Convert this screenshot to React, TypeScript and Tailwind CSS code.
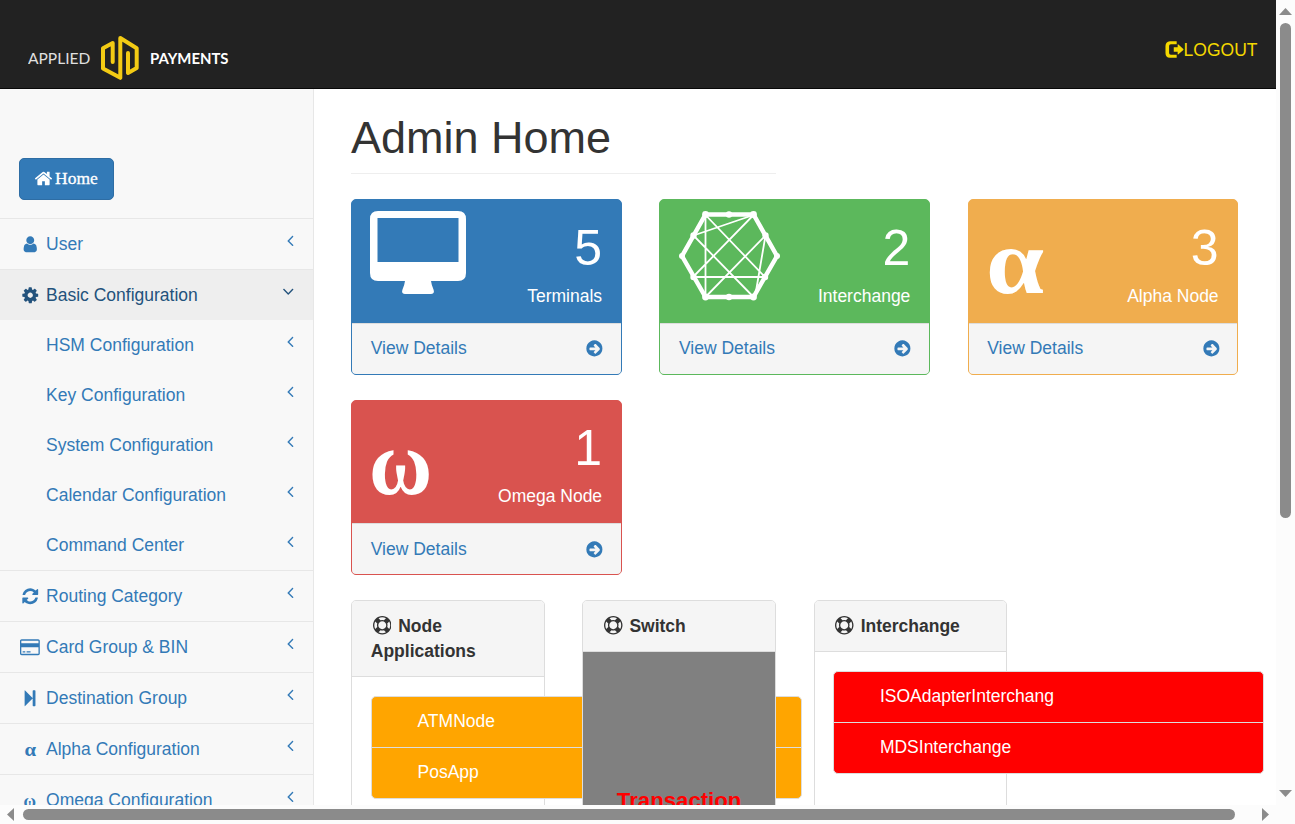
import type { ReactNode } from "react";

const ICONS = {
  home: "M1472 992v480q0 26-19 45t-45 19h-384v-384h-256v384h-384q-26 0-45-19t-19-45v-480q0-1 .5-3t.5-3l575-474 575 474q1 2 1 6zm223-69l-62 74q-8 9-21 11h-3q-13 0-21-7l-692-577-692 577q-12 8-24 7-13-2-21-11l-62-74q-8-10-7-23.5t11-21.5l719-599q32-26 76-26t76 26l244 204v-195q0-14 9-23t23-9h192q14 0 23 9t9 23v408l219 182q10 8 11 21.5t-7 23.5z",
  user: "M1536 1399q0 109-62.5 187t-150.5 78h-854q-88 0-150.5-78t-62.5-187q0-85 8.5-160.5t31.5-152 58.5-131 94-89 134.5-34.5q131 128 313 128t313-128q76 0 134.5 34.5t94 89 58.5 131 31.5 152 8.5 160.5zm-256-887q0 159-112.5 271.5t-271.5 112.5-271.5-112.5-112.5-271.5 112.5-271.5 271.5-112.5 271.5 112.5 112.5 271.5z",
  gear: "M1152 896q0-106-75-181t-181-75-181 75-75 181 75 181 181 75 181-75 75-181zm512-109v222q0 12-8 23t-20 13l-185 28q-19 54-39 91 35 50 107 138 10 12 10 25t-9 23q-27 37-99 108t-94 71q-12 0-26-9l-138-108q-44 23-91 38-16 136-29 186-7 28-36 28h-222q-14 0-24.5-8.5t-11.5-21.5l-28-184q-49-16-90-37l-141 107q-10 9-25 9-14 0-25-11-126-114-165-168-7-10-7-23 0-12 8-23 15-21 51-66.5t54-70.5q-27-50-41-99l-183-27q-13-2-21-12.5t-8-23.5v-222q0-12 8-23t19-13l186-28q14-46 39-92-40-57-107-138-10-12-10-24 0-10 9-23 26-36 98.5-107.5t94.5-71.5q13 0 26 10l138 107q44-23 91-38 16-136 29-186 7-28 36-28h222q14 0 24.5 8.5t11.5 21.5l28 184q49 16 90 37l142-107q9-9 24-9 13 0 25 10 129 119 165 170 7 8 7 22 0 12-8 23-15 21-51 66.5t-54 70.5q26 50 41 98l183 28q13 2 21 12.5t8 23.5z",
  refresh:
    "M1639 1056q0 5-1 7-64 268-268 434.5t-478 166.5q-146 0-282.5-55t-243.5-157l-129 129q-19 19-45 19t-45-19-19-45v-448q0-26 19-45t45-19h448q26 0 45 19t19 45-19 45l-137 137q71 66 161 102t187 36q134 0 250-65t186-179q11-17 53-117 8-23 30-23h192q13 0 22.5 9.5t9.5 22.5zm25-800v448q0 26-19 45t-45 19h-448q-26 0-45-19t-19-45 19-45l138-138q-148-137-349-137-134 0-250 65t-186 179q-11 17-53 117-8 23-30 23h-199q-13 0-22.5-9.5t-9.5-22.5v-7q65-268 270-434.5t480-166.5q146 0 284 55.5t245 156.5l130-129q19-19 45-19t45 19 19 45z",
  step: "M352 160q0-50 45-13l725 720q6 6 10 14V192q0-60 60-60h148q60 0 60 60v1408q0 60-60 60h-148q-60 0-60-60V911q-4 8-10 14l-725 720q-45 37-45-13z",
  ring: "M896 0q182 0 348 71t286 191 191 286 71 348-71 348-191 286-286 191-348 71-348-71-286-191-191-286-71-348 71-348 191-286 286-191 348-71zm0 128q-190 0-361 90l194 194q82-28 167-28t167 28l194-194q-171-90-361-90zm-678 1129l194-194q-28-82-28-167t28-167l-194-194q-90 171-90 361t90 361zm678 407q190 0 361-90l-194-194q-82 28-167 28t-167-28l-194 194q171 90 361 90zm0-384q159 0 271.5-112.5t112.5-271.5-112.5-271.5-271.5-112.5-271.5 112.5-112.5 271.5 112.5 271.5 271.5 112.5zm484-217l194 194q90-171 90-361t-90-361l-194 194q28 82 28 167t-28 167z",
  left: "M1203 544q0 13-10 23l-393 393 393 393q10 10 10 23t-10 23l-50 50q-10 10-23 10t-23-10l-466-466q-10-10-10-23t10-23l466-466q10-10 23-10t23 10l50 50q10 10 10 23z",
  down: "M1395 736q0 13-10 23l-466 466q-10 10-23 10t-23-10l-466-466q-10-10-10-23t10-23l50-50q10-10 23-10t23 10l393 393 393-393q10-10 23-10t23 10l50 50q10 10 10 23z",
};

// The arrow is cut out of its disc on the same centre line.
const ARROW_DISC =
  "M1413 896q0-27-18-45l-91-91-271-271q-18-18-45-18t-45 18l-91 91q-18 18-18 45t18 45l142 142h-502q-26 0-45 19t-19 45v128q0 26 19 45t45 19h502l-142 142q-19 19-19 45t19 45l91 91q18 18 45 18t45-18l362-362q18-18 18-45zm251 0q0 209-103 385.5t-279.5 279.5-385.5 103-385.5-103-279.5-279.5-103-385.5 103-385.5 279.5-279.5 385.5-103 385.5 103 279.5 279.5 103 385.5z";

function Glyph({ d, className }: { d: string; className?: string }) {
  return (
    <svg viewBox="0 0 1792 1792" fill="currentColor" className={className ?? "mr-[-0.5px] size-[18.5px] shrink-0"}>
      <path d={d} />
    </svg>
  );
}

function CardGlyph() {
  return (
    <svg viewBox="0 0 1920 1792" fill="currentColor" className="h-[18.5px] w-[19.8px] shrink-0">
      <path d="M1760 128q66 0 113 47t47 113v1216q0 66-47 113t-113 47h-1600q-66 0-113-47t-47-113v-1216q0-66 47-113t113-47h1600zm-1600 128q-13 0-22.5 9.5t-9.5 22.5v224h1664v-224q0-13-9.5-22.5t-22.5-9.5h-1600zm1600 1280q13 0 22.500-9.500t9.500-22.500v-608h-1664v608q0 13 9.500 22.500t22.500 9.500h1600zm-1504-128v-128h256v128h-256zm384 0v-128h384v128h-384z" />
    </svg>
  );
}

function Logo() {
  return (
    <div className="flex items-center pt-[27px] pl-[27px] text-white">
      <span className="w-[73px] font-[Lato,sans-serif] text-[16.2px] leading-5 font-normal text-[#e0e0e0]">
        <span className="ml-[0.7px] inline-block origin-left scale-x-[0.96]">APPLIED</span>
      </span>
      <svg
        viewBox="0 0 40 46"
        className="h-[46px] w-10"
        fill="none"
        stroke="#f3cb14"
        strokeWidth="4"
        strokeLinejoin="round"
        strokeLinecap="round"
      >
        <path d="M12.7 27V8L3 13.200V33.500L20.300 42.800V3L36.700 13.200V33L28 38V18" />
      </svg>
      <span className="ml-[10px] font-[Lato,sans-serif] text-[15.6px] leading-5 font-bold">
        <span className="inline-block origin-left scale-x-[0.955]">PAYMENTS</span>
      </span>
    </div>
  );
}

function Navbar() {
  return (
    <header className="flex h-[89px] shrink-0 items-center justify-between border-b border-[#080808] bg-[#222]">
      <Logo />
      <a className="flex items-center pt-[12px] pr-[18.5px] text-[#f5d800]">
        <svg viewBox="0 0 19 17" className="mb-[2px] h-[17px] w-[18.5px]" fill="currentColor">
          <path d="M5 0H12V3.200H6Q4.200 3.200 4.200 5V12Q4.200 13.800 6 13.800H12V17H5Q.5 16.500 .5 12V5Q.5 .5 5 0Z M9 6.300H13V3.600q0-.8.8-.2l5 4.500q.5.500 0 1l-5 4.500q-.8.600-.8-.2V10.700H9Z" />
        </svg>
        <span className="leading-[25px]">LOGOUT</span>
      </a>
    </header>
  );
}

function MenuRow({ icon, label, open }: { icon: ReactNode; label: string; open?: boolean }) {
  return (
    <a
      className={
        open
          ? "flex h-[50px] items-center bg-[#eee] px-[18.75px] text-[#23527c]"
          : "flex h-[50px] items-center px-[18.75px] text-[#337ab7]"
      }
    >
      <span className="flex w-[22.5px] shrink-0 justify-center">{icon}</span>
      <span className="ml-[4.8px] grow whitespace-nowrap">{label}</span>
      <Glyph
        d={open ? ICONS.down : ICONS.left}
        className={open ? "-mr-[3px] mb-[8px] size-[18.5px]" : "-mr-[5.3px] mb-[8px] size-[18.5px]"}
      />
    </a>
  );
}

const greek = "font-['Liberation_Serif',serif] font-bold leading-none";

const SUBMENU = [
  "HSM Configuration",
  "Key Configuration",
  "System Configuration",
  "Calendar Configuration",
  "Command Center",
];

function Sidebar() {
  return (
    <nav className="w-[314px] shrink-0 border-r border-[#e7e7e7] bg-[#f8f8f8]">
      <div className="h-[130px] border-b border-[#e7e7e7] px-[19px] pt-[69px]">
        <a className="flex h-[42px] w-[95px] items-center rounded-[5px] border border-[#2e6da4] bg-[#337ab7] pb-[2px] pl-[13.5px] font-['Liberation_Serif',serif] text-white [-webkit-text-stroke:0.3px_white]">
          <Glyph d={ICONS.home} className="size-[19px] shrink-0" />
          <span className="ml-[2.5px]">Home</span>
        </a>
      </div>
      <ul>
        <li className="border-b border-[#e7e7e7]">
          <MenuRow icon={<Glyph d={ICONS.user} />} label="User" />
        </li>
        <li className="border-b border-[#e7e7e7]">
          <MenuRow icon={<Glyph d={ICONS.gear} />} label="Basic Configuration" open />
          {SUBMENU.map((label) => (
            <MenuRow key={label} icon={null} label={label} />
          ))}
        </li>
        <li className="border-b border-[#e7e7e7]">
          <MenuRow icon={<Glyph d={ICONS.refresh} />} label="Routing Category" />
        </li>
        <li className="border-b border-[#e7e7e7]">
          <MenuRow icon={<CardGlyph />} label="Card Group & BIN" />
        </li>
        <li className="border-b border-[#e7e7e7]">
          <MenuRow icon={<Glyph d={ICONS.step} />} label="Destination Group" />
        </li>
        <li className="border-b border-[#e7e7e7]">
          <MenuRow
            icon={<span className={`${greek} mt-[2px] scale-x-[1.12] text-[18.5px]`}>α</span>}
            label="Alpha Configuration"
          />
        </li>
        <li>
          <MenuRow
            icon={<span className={`${greek} mt-[2px] scale-x-[0.92] text-[18.5px]`}>ω</span>}
            label="Omega Configuration"
          />
        </li>
      </ul>
    </nav>
  );
}

function MonitorIcon() {
  return (
    <svg viewBox="0 0 96 83" className="h-[83px] w-24" fill="#fff">
      <path
        fillRule="evenodd"
        d="M8 0H88Q96 0 96 8V62Q96 70 88 70H61Q61.500 74 63.500 78.500Q65 83 61 83H35Q31 83 32.500 78.500Q34.500 74 35 70H8Q0 70 0 62V8Q0 0 8 0ZM7.500 7V51H88.500V7Z"
      />
    </svg>
  );
}

function NetworkIcon() {
  return (
    <svg viewBox="0 0 102 90" className="h-[90px] w-[102px]" fill="none" stroke="#fff">
      <path strokeWidth="4.400" d="M27.500 3.500H75.500L99 45 75.500 86H27.500L4 45Z" />
      <path
        strokeWidth="1.800"
        d="M27.500 4V86M27.500 4L87 66M75.500 4L15 66M75.500 4L15.500 24.500M15.500 24.500L75.500 86M87.500 24.500L27.500 86M87.500 24.500L77 86M15 66H87"
      />
      <g fill="#fff" stroke="none">
        <circle cx="27.500" cy="3.500" r="3.400" />
        <circle cx="51" cy="3.500" r="3.200" />
        <circle cx="75.500" cy="3.500" r="3.400" />
        <circle cx="87.500" cy="24.500" r="3.200" />
        <circle cx="99" cy="45" r="3" />
        <circle cx="87" cy="66" r="3.200" />
        <circle cx="75.500" cy="86" r="3.400" />
        <circle cx="51" cy="86" r="3.200" />
        <circle cx="27.500" cy="86" r="3.400" />
        <circle cx="15.500" cy="66" r="3.200" />
        <circle cx="4" cy="45" r="3" />
        <circle cx="15.500" cy="24.500" r="3.200" />
      </g>
    </svg>
  );
}

function StatCard({
  icon,
  value,
  label,
  tone,
  size,
  linkPad,
  valuePad,
}: {
  icon: ReactNode;
  value: string;
  label: string;
  tone: string;
  size: string;
  linkPad: string;
  valuePad: string;
}) {
  return (
    <section className={`flex flex-col overflow-hidden rounded-[5px] border ${tone} ${size}`}>
      <div className="flex grow justify-between pr-[18.4px] pl-[18px] text-white">
        {icon}
        <div className={`flex flex-col items-end ${valuePad}`}>
          <span className="text-[50px] leading-[55px]">{value}</span>
          <span className="mt-auto mb-[14px] leading-[25px]">{label}</span>
        </div>
      </div>
      <div
        className={`flex h-[52px] shrink-0 items-center justify-between border-t border-[#ddd] bg-[#f5f5f5] px-[18.75px] text-[#337ab7] ${linkPad}`}
      >
        <span>View Details</span>
        <Glyph d={ARROW_DISC} className="-mr-[2px] size-[18.75px]" />
      </div>
    </section>
  );
}

function Panel({ title, bodyClass, children }: { title: string; bodyClass: string; children: ReactNode }) {
  return (
    <section className="flex h-[300px] w-[193.75px] shrink-0 flex-col rounded-[5px] border border-[#ddd] bg-white">
      <h3 className="rounded-t-[4px] border-b border-[#ddd] bg-[#f5f5f5] px-[18.75px] py-[12.5px] leading-[25px] font-bold text-[#333]">
        <span className="inline-flex w-[22.5px] justify-center align-[-3px]">
          <Glyph d={ICONS.ring} className="size-[18.5px]" />
        </span>{" "}
        {title}
      </h3>
      <div className={bodyClass}>{children}</div>
    </section>
  );
}

function NodeList({ items, tone }: { items: string[]; tone: string }) {
  return (
    <ul className={`w-[431px] divide-y divide-[#ddd] overflow-hidden rounded-[5px] border border-[#ddd] text-white ${tone}`}>
      {items.map((item) => (
        <li key={item} className="flex h-[50.5px] items-center pl-[45.5px]">
          {item}
        </li>
      ))}
    </ul>
  );
}

const bigGreek =
  "mt-[15px] -ml-px origin-left self-start font-['Liberation_Serif',serif] text-[93px] leading-[93px] font-bold";

function Main() {
  return (
    <main className="grow bg-white pl-[37px]">
      <h1 className="mt-[24px] h-[61px] w-[425px] border-b border-[#eee] text-[45px] leading-[49.5px] text-[#333]">
        Admin Home
      </h1>
      <div className="mt-[25px] grid w-[887px] grid-cols-3 gap-x-[37.75px] gap-y-[25px]">
        <StatCard
          icon={<div className="pt-[11px]"><MonitorIcon /></div>}
          value="5"
          label="Terminals"
          tone="border-[#337ab7] bg-[#337ab7]"
          size="h-44"
          linkPad="h-[52px] max-h-[51px] pb-[2px]"
          valuePad="pt-[21px]"
        />
        <StatCard
          icon={<div className="pt-[11px]"><NetworkIcon /></div>}
          value="2"
          label="Interchange"
          tone="border-[#5cb85c] bg-[#5cb85c]"
          size="h-44"
          linkPad="max-h-[51px] pb-[2px]"
          valuePad="pt-[21px]"
        />
        <StatCard
          icon={<span className={`${bigGreek} scale-x-[1.12]`}>α</span>}
          value="3"
          label="Alpha Node"
          tone="border-[#f0ad4e] bg-[#f0ad4e]"
          size="h-44"
          linkPad="max-h-[51px] pb-[2px]"
          valuePad="pt-[21px]"
        />
        <StatCard
          icon={<span className={`${bigGreek} scale-x-[0.93]`}>ω</span>}
          value="1"
          label="Omega Node"
          tone="border-[#d9534f] bg-[#d9534f]"
          size="h-[175px]"
          linkPad="max-h-[51px]"
          valuePad="pt-5"
        />
      </div>
      <div className="mt-[25px] flex gap-[37.5px]">
        <Panel title="Node Applications" bodyClass="pt-[19px] pl-[19px]">
          <NodeList items={["ATMNode", "PosApp"]} tone="bg-[orange]" />
        </Panel>
        <Panel
          title="Switch"
          bodyClass="relative grow bg-[gray] pt-[135px] text-center text-[22.2px] leading-[28px] font-bold text-[red]"
        >
          Transaction
        </Panel>
        <Panel title="Interchange" bodyClass="pt-[19px] pl-[18.9px]">
          <NodeList items={["ISOAdapterInterchang", "MDSInterchange"]} tone="bg-[red]" />
        </Panel>
      </div>
    </main>
  );
}

export default function App() {
  return (
    <div className="flex h-[824px] w-[1295px] flex-col overflow-hidden bg-[#fcfcfc] font-['Liberation_Sans',Arial,sans-serif] text-[17.5px] leading-[25px]">
      <div className="flex h-[805px] shrink-0">
        <div className="flex w-[1276px] shrink-0 flex-col overflow-hidden">
          <Navbar />
          <div className="flex grow">
            <Sidebar />
            <Main />
          </div>
        </div>
        <div className="flex w-[19px] flex-col items-center justify-between pt-2 pb-2">
          <div className="flex flex-col items-center gap-2">
            <svg viewBox="0 0 13 7" className="h-[7px] w-[13px]" fill="#8b8b8b">
              <path d="M6.500 0L13 7H0z" />
            </svg>
            <div className="h-[495px] w-[11px] rounded-full bg-[#8b8b8b]" />
          </div>
          <svg viewBox="0 0 13 7" className="h-[7px] w-[13px]" fill="#8b8b8b">
            <path d="M0 0h13L6.500 7z" />
          </svg>
        </div>
      </div>
      <div className="flex h-[19px] w-[1276px] items-center justify-between pr-[7px] pl-[7px]">
        <div className="flex items-center gap-[9px]">
          <svg viewBox="0 0 7 13" className="h-[13px] w-[7px]" fill="#8b8b8b">
            <path d="M7 0v13L0 6.500z" />
          </svg>
          <div className="h-[11px] w-[1212px] rounded-full bg-[#8b8b8b]" />
        </div>
        <svg viewBox="0 0 7 13" className="h-[13px] w-[7px]" fill="#8b8b8b">
          <path d="M0 0v13L7 6.500z" />
        </svg>
      </div>
    </div>
  );
}
